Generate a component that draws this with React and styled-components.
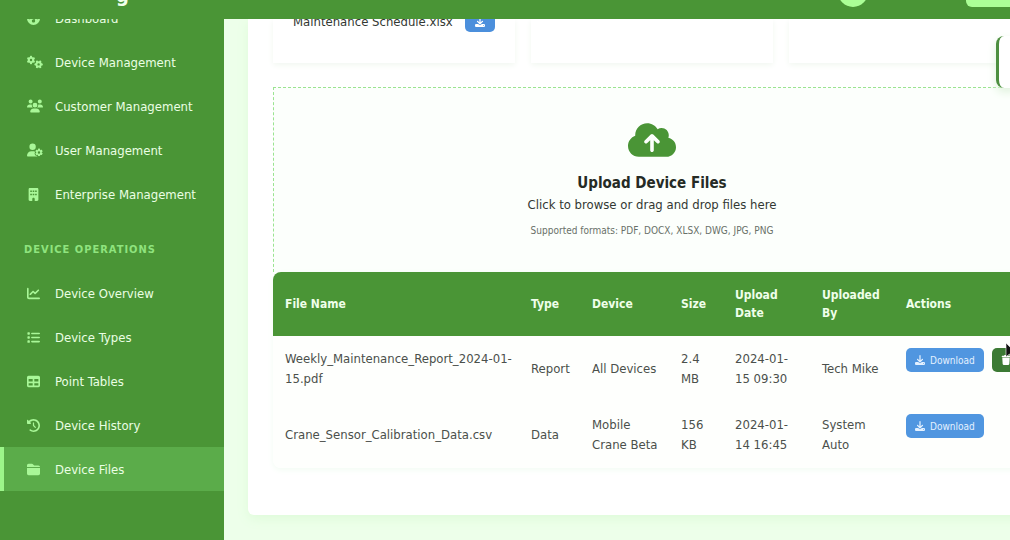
import React from 'react'
import styled, { createGlobalStyle } from 'styled-components'
import {
    FaBuilding,
    FaChartLine,
    FaClockRotateLeft,
    FaCloudArrowUp,
    FaDownload,
    FaFolderClosed,
    FaGaugeHigh,
    FaGears,
    FaList,
    FaTable,
    FaTrash,
    FaUserGear,
    FaUsers,
} from 'react-icons/fa6'

const managementLinks = [
    { label: 'Dashboard', icon: FaGaugeHigh },
    { label: 'Device Management', icon: FaGears, wide: true },
    { label: 'Customer Management', icon: FaUsers, wide: true },
    { label: 'User Management', icon: FaUserGear, wide: true },
    { label: 'Enterprise Management', icon: FaBuilding },
]

const deviceLinks = [
    { label: 'Device Overview', icon: FaChartLine },
    { label: 'Device Types', icon: FaList },
    { label: 'Point Tables', icon: FaTable },
    { label: 'Device History', icon: FaClockRotateLeft },
    { label: 'Device Files', icon: FaFolderClosed, active: true },
]

const columns = [
    { label: 'File Name' },
    { label: 'Type', width: 61 },
    { label: 'Device', width: 89 },
    { label: 'Size', width: 54 },
    { label: 'Upload Date', width: 87 },
    { label: 'Uploaded By', width: 84 },
    { label: 'Actions', width: 137 },
]

const files = [
    {
        name: 'Weekly_Maintenance_Report_2024-01-15.pdf',
        type: 'Report',
        device: 'All Devices',
        size: '2.4 MB',
        date: '2024-01-15 09:30',
        by: 'Tech Mike',
        removable: true,
    },
    {
        name: 'Crane_Sensor_Calibration_Data.csv',
        type: 'Data',
        device: 'Mobile Crane Beta',
        size: '156 KB',
        date: '2024-01-14 16:45',
        by: 'System Auto',
    },
]

const NavList = ({ links }) => (
    <List>
        {links.map((link) => (
            <li key={link.label}>
                <NavLink href="#" $active={link.active} aria-current={link.active ? 'page' : undefined}>
                    <NavIcon $wide={link.wide}><link.icon /></NavIcon>
                    {link.label}
                </NavLink>
            </li>
        ))}
    </List>
)

const FileTable = () => (
    <Table>
        <colgroup>
            {columns.map((col) => <Col key={col.label} $width={col.width} />)}
        </colgroup>
        <thead>
            <tr>{columns.map((col) => <Th key={col.label}>{col.label}</Th>)}</tr>
        </thead>
        <tbody>
            {files.map((file) => (
                <tr key={file.name}>
                    <Td>{file.name}</Td>
                    <Td>{file.type}</Td>
                    <Td>{file.device}</Td>
                    <Td>{file.size}</Td>
                    <Td $wide>{file.date}</Td>
                    <Td $wide>{file.by}</Td>
                    <Td $top>
                        <Actions>
                            <ActionButton><FaDownload />Download</ActionButton>
                            {file.removable && <ActionButton $danger aria-label="Delete"><FaTrash /></ActionButton>}
                        </Actions>
                    </Td>
                </tr>
            ))}
        </tbody>
    </Table>
)

const App = () => (
    <Page>
        <GlobalStyle />
        <Header>
            <Brand>g</Brand>
            <Avatar />
            <HeaderButton aria-label="Account" />
        </Header>
        <Body>
            <Sidebar>
                <NavList links={managementLinks} />
                <SectionTitle>Device Operations</SectionTitle>
                <NavList links={deviceLinks} />
            </Sidebar>
            <Main>
                <Panel>
                    <CardGrid>
                        <FileCard>
                            <span>Maintenance Schedule.xlsx</span>
                            <CardButton aria-label="Download"><FaDownload /></CardButton>
                        </FileCard>
                        <FileCard />
                        <FileCard />
                    </CardGrid>
                    <UploadZone>
                        <FaCloudArrowUp />
                        <UploadTitle>Upload Device Files</UploadTitle>
                        <UploadText>Click to browse or drag and drop files here</UploadText>
                        <UploadHint>Supported formats: PDF, DOCX, XLSX, DWG, JPG, PNG</UploadHint>
                    </UploadZone>
                    <FileTable />
                </Panel>
            </Main>
        </Body>
        <Toast />
        <Cursor viewBox="0 0 12 19">
            <path d="M1 1v14l3.4-3 2.3 5.4 2.4-1-2.3-5.3H11z" fill="#111" stroke="#fff" strokeWidth="0.6" />
        </Cursor>
    </Page>
)

const GlobalStyle = createGlobalStyle`
  * {
    box-sizing: border-box;
  }

  body {
    margin: 0;
    font-family: Tahoma, "DejaVu Sans Condensed", "DejaVu Sans", sans-serif;
    font-size: 13px;
    color: #333833;
    background: #edffea;
  }

  button {
    font-family: inherit;
    border: 0;
    cursor: pointer;
  }
`

const Page = styled.div`
  position: relative;
  display: flex;
  flex-direction: column;
  height: 100vh;
  overflow: hidden;
`

const Header = styled.header`
  display: flex;
  align-items: flex-end;
  flex: none;
  height: 19px;
  padding: 0 0 12px 116px;
  overflow: hidden;
  background: #4a9536;
`

const Brand = styled.h1`
  flex: 1;
  margin: 0;
  font-size: 20px;
  line-height: 24px;
  color: #f1ffec;
`

const Avatar = styled.div`
  width: 30px;
  height: 30px;
  margin-right: 98px;
  border-radius: 50%;
  background: #abff96;
`

const HeaderButton = styled.button`
  width: 44px;
  height: 30px;
  border-radius: 6px 0 0 6px;
  background: #abff96;
`

const Body = styled.div`
  display: flex;
  flex: 1;
  min-height: 0;
`

const Sidebar = styled.nav`
  flex: none;
  width: 224px;
  overflow: hidden;
  background: #4a9536;

  /* scrolled list, first row is half under the header */
  & > ul:first-child {
    margin-top: -23px;
  }
`

const List = styled.ul`
  margin: 0;
  padding: 0;
  list-style: none;
`

const NavLink = styled.a`
  display: flex;
  align-items: center;
  height: 44px;
  padding-left: 23px;
  border-left: 4px solid ${props => props.$active ? '#9cf58a' : 'transparent'};
  background: ${props => props.$active ? '#5bac4a' : 'transparent'};
  color: #eaffe4;
  text-decoration: none;
`

const NavIcon = styled.span`
  display: flex;
  width: 28px;
  color: #a9f798;

  svg {
    width: ${props => props.$wide ? '16px' : '13px'};
    height: ${props => props.$wide ? '16px' : '13px'};
  }
`

const SectionTitle = styled.h2`
  margin: 25px 24px 12px;
  font-size: 11px;
  line-height: 18px;
  letter-spacing: 1px;
  text-transform: uppercase;
  color: #8fe37e;
`

const Main = styled.main`
  flex: 1;
  min-width: 0;
  padding: 0 0 24px 24px;
  overflow: hidden;
`

const Panel = styled.section`
  margin-right: -45px;
  padding: 0 24px 47px 25px;
  border-radius: 0 0 6px 6px;
  background: #fff;
  box-shadow: 0 4px 12px #dffbda;
`

const CardGrid = styled.div`
  display: grid;
  grid-template-columns: repeat(3, 1fr);
  gap: 16px;
  margin-bottom: 24px;
`

const FileCard = styled.div`
  display: flex;
  justify-content: space-between;
  align-items: flex-start;
  height: 44px;
  padding: 0 20px;
  line-height: 6px;
  background: #fff;
  box-shadow: 0 2px 6px #f1f7f0;
`

const CardButton = styled.button`
  display: flex;
  align-items: flex-start;
  justify-content: center;
  width: 30px;
  height: 13px;
  padding: 0;
  border-radius: 0 0 5px 5px;
  font-size: 10px;
  color: #fff;
  background: #4b8fdc;

  svg {
    margin-top: -2px;
  }
`

const UploadZone = styled.div`
  display: flex;
  flex-direction: column;
  align-items: center;
  padding: 32px 24px 34px;
  border: 1px dashed #9be491;
  border-bottom: 0;
  background: #fcfffc;

  svg {
    font-size: 48px;
    height: 40px;
    color: #4a9536;
  }
`

const UploadTitle = styled.h3`
  margin: 12px 0 0;
  font-size: 15px;
  line-height: 22px;
  color: #252b25;
`

const UploadText = styled.p`
  margin: 0;
  line-height: 22px;
`

const UploadHint = styled.p`
  margin: 8px 0 0;
  font-size: 10px;
  line-height: 14px;
  color: #687068;
`

const Table = styled.table`
  width: 100%;
  table-layout: fixed;
  border-collapse: collapse;
  border-radius: 8px;
  overflow: hidden;
  color: #4b504b;
  box-shadow: 0 2px 6px #f2fcf3;
`

const Col = styled.col`
  width: ${props => props.$width ? `${props.$width}px` : 'auto'};
`

const Th = styled.th`
  height: 64px;
  padding: 0 12px;
  font-size: 12px;
  line-height: 18px;
  text-align: left;
  color: #efffea;
  background: #4a9536;
`

const Td = styled.td`
  height: 66px;
  padding: ${props => props.$top ? '12px' : `0 ${props.$wide ? 12 : 4}px 0 12px`};
  line-height: 20px;
  vertical-align: ${props => props.$top ? 'top' : 'middle'};
  background: #fefffd;
`

const Actions = styled.div`
  display: flex;
  gap: 8px;
`

const ActionButton = styled.button`
  display: flex;
  align-items: center;
  gap: 5px;
  flex: none;
  height: 24px;
  padding: 0 9px;
  border-radius: 5px;
  font-size: 10px;
  color: ${props => props.$danger ? '#fff' : '#e4f1ff'};
  background: ${props => props.$danger ? '#3c7a34' : '#5096e0'};
`

const Toast = styled.div`
  position: absolute;
  top: 36px;
  right: -8px;
  width: 22px;
  height: 52px;
  border-left: 3px solid #4d8f40;
  border-radius: 8px;
  background: #fff;
  box-shadow: 0 4px 10px #dff2dc;
`

const Cursor = styled.svg`
  position: absolute;
  top: 342px;
  right: -7px;
  width: 12px;
  height: 19px;
`

export default App
